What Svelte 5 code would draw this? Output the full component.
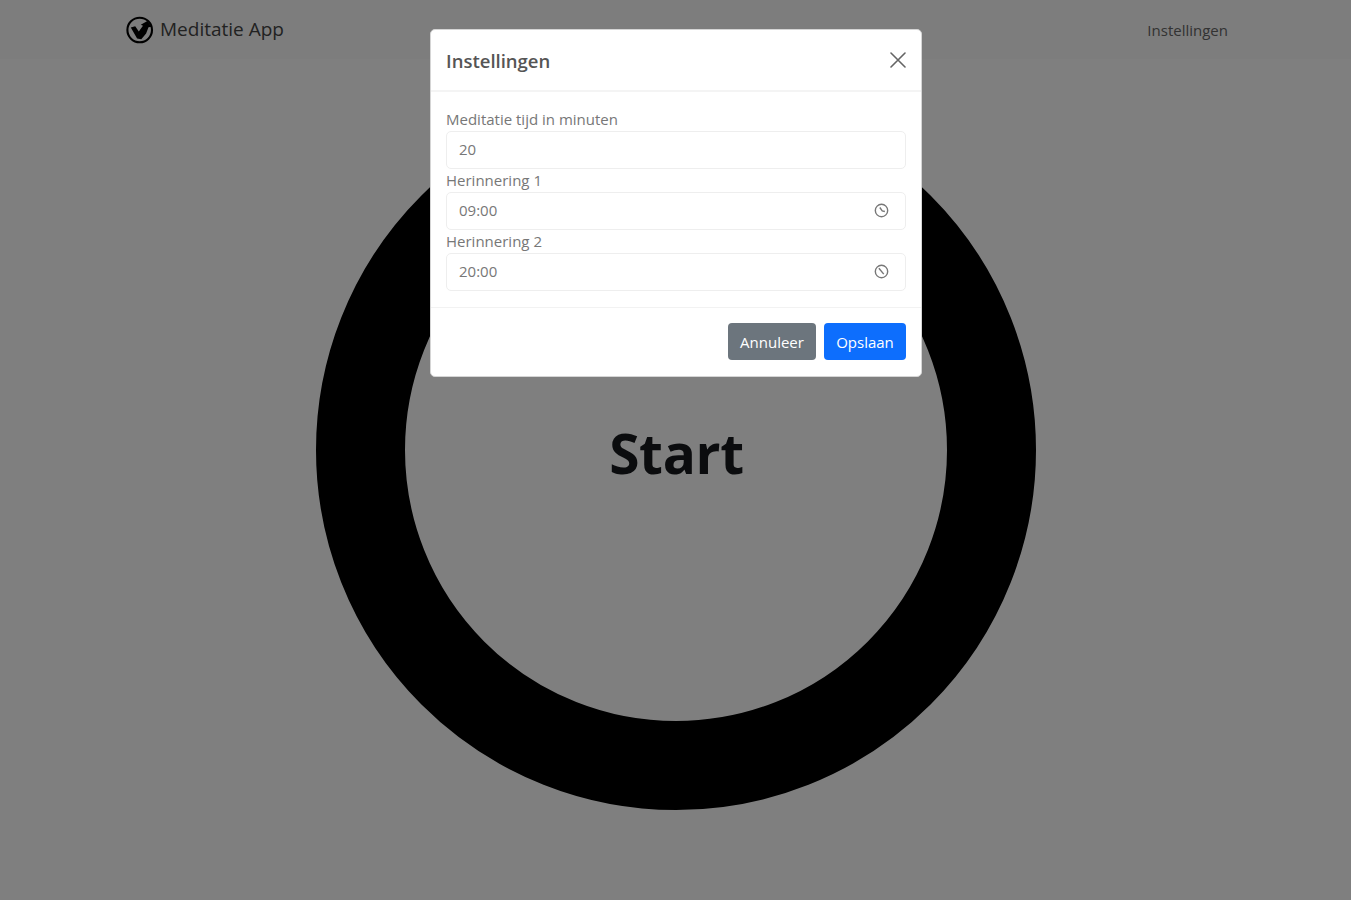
<script>
  let minutes = "20";
  let reminders = [
    { id: "reminder-1", label: "Herinnering 1", time: "09:00", clock: "M6.2 4.8l2.6 3.6 2.8.6" },
    { id: "reminder-2", label: "Herinnering 2", time: "20:00", clock: "M5.2 4.6l5.2 6.2" },
  ];
  let showSettings = true;

  function openSettings() {
    showSettings = true;
  }

  function closeSettings() {
    showSettings = false;
  }
</script>

<div class="app">
  <nav class="navbar">
    <a class="brand" href="#home">
      <svg class="logo" viewBox="0 0 28 28">
        <circle cx="13.7" cy="14" r="12.3" fill="none" stroke="#000" stroke-width="2.1" />
        <path d="M4.8 11.6l4.4-1.4 3.6 5.4L17 9.8l-2.2-1 6.6-3.8 4.1 5.8-3 .4-2.4 6.4-4.8 5.6-4.2-.6z" fill="#000" />
      </svg>
      <span class="brand-name">Meditatie App</span>
    </a>
    <button class="nav-link" on:click={openSettings}>Instellingen</button>
  </nav>
  <main>
    <button class="timer"><span class="start">Start</span></button>
  </main>
</div>

{#if showSettings}
  <div class="backdrop">
    <div class="modal" role="dialog" aria-labelledby="modal-title">
      <div class="modal-header">
        <h5 class="modal-title" id="modal-title">Instellingen</h5>
        <button class="close" aria-label="Sluiten" on:click={closeSettings}>
          <svg viewBox="0 0 16 16">
            <path d="M1 1l14 14M15 1L1 15" fill="none" stroke="#000" stroke-width="1.6" stroke-linecap="round" />
          </svg>
        </button>
      </div>
      <div class="modal-body">
        <label for="minutes">Meditatie tijd in minuten</label>
        <div class="control">
          <input id="minutes" type="text" bind:value={minutes} />
        </div>
        {#each reminders as reminder}
          <label for={reminder.id}>{reminder.label}</label>
          <div class="control">
            <input id={reminder.id} type="text" bind:value={reminder.time} />
            <svg class="clock" viewBox="0 0 16 16">
              <circle cx="8" cy="8" r="6.6" />
              <path d={reminder.clock} />
            </svg>
          </div>
        {/each}
      </div>
      <div class="modal-footer">
        <button class="btn cancel" on:click={closeSettings}>Annuleer</button>
        <button class="btn save" on:click={closeSettings}>Opslaan</button>
      </div>
    </div>
  </div>
{/if}

<style>
  :global(body) {
    margin: 0;
    overflow: hidden;
    background: #fff;
  }
  .app,
  .backdrop {
    font-family: "Open Sans", "Noto Sans", sans-serif;
    font-size: 15px;
    color: #212529;
  }
  .app {
    height: 100vh;
    display: flex;
    flex-direction: column;
  }
  button {
    font: inherit;
    border: 0;
    padding: 0;
    background: none;
    cursor: pointer;
  }
  .navbar {
    height: 59px;
    box-sizing: border-box;
    padding: 0 123px 0 126px;
    display: flex;
    align-items: center;
    justify-content: space-between;
    background: #fafafa;
  }
  .brand {
    display: flex;
    align-items: center;
    gap: 6px;
    padding-top: 1px;
    color: #444;
    text-decoration: none;
  }
  .logo {
    width: 28px;
    height: 28px;
  }
  .brand-name {
    font-size: 19px;
    line-height: 28px;
    padding-bottom: 2px;
  }
  .nav-link {
    padding-top: 1px;
    color: #666;
  }
  main {
    flex: 1;
    display: flex;
    justify-content: center;
    padding: 31px 0 0 1px;
  }
  .timer {
    width: 720px;
    height: 720px;
    box-sizing: border-box;
    border: 89px solid #000;
    border-radius: 50%;
    color: #16191c;
  }
  .start {
    display: block;
    font-size: 55px;
    font-weight: 700;
    line-height: 64px;
    padding: 6px 0 0 1px;
    letter-spacing: -0.3px;
  }
  .backdrop {
    position: fixed;
    inset: 0;
    display: flex;
    justify-content: center;
    align-items: flex-start;
    padding: 29px 0 0 1px;
    background: rgba(0, 0, 0, 0.5);
  }
  .modal {
    width: 492px;
    box-sizing: border-box;
    border: 1px solid #d5d5d5;
    border-radius: 5px;
    background: #fff;
  }
  .modal-header {
    height: 62px;
    box-sizing: border-box;
    padding: 0 15px;
    display: flex;
    align-items: center;
    justify-content: space-between;
    border-bottom: 2px solid #f4f4f4;
  }
  .modal-title {
    margin: 0;
    font-size: 18.5px;
    font-weight: 600;
    color: #555;
  }
  .close svg {
    display: block;
    width: 16px;
    height: 16px;
    margin-bottom: 1px;
    opacity: 0.6;
  }
  .modal-body {
    padding: 16px 15px;
  }
  label {
    display: block;
    height: 23px;
    line-height: 23px;
    color: #777;
  }
  .control {
    height: 38px;
    box-sizing: border-box;
    display: flex;
    align-items: center;
    padding: 0 16px 2px 12px;
    border: 1px solid #eee;
    border-radius: 5px;
  }
  input {
    flex: 1;
    min-width: 0;
    padding: 0;
    border: 0;
    outline: 0;
    font: inherit;
    color: #777;
    background: none;
  }
  .clock {
    width: 15px;
    height: 15px;
    fill: none;
    stroke: #777;
    stroke-width: 1.5;
  }
  .modal-footer {
    display: flex;
    justify-content: flex-end;
    gap: 8px;
    padding: 15px 15px 16px;
    border-top: 1px solid #f2f2f2;
  }
  .btn {
    height: 37px;
    border-radius: 4px;
    color: #fff;
  }
  .cancel {
    width: 88px;
    background: #6c757d;
  }
  .save {
    width: 82px;
    background: #0d6efd;
  }
</style>
